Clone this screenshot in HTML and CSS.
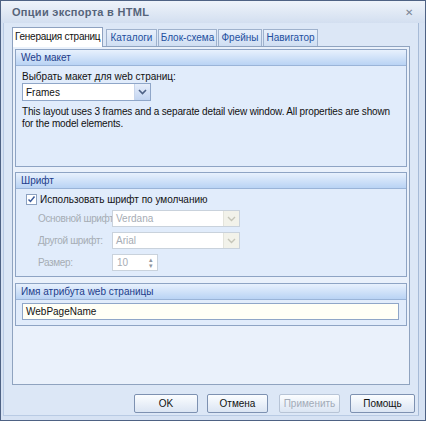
FILE: index.html
```html
<!DOCTYPE html>
<html>
<head>
<meta charset="utf-8">
<title>Опции экспорта в HTML</title>
<link rel="stylesheet" href="styles.css">
</head>
<body>
<div class="window">
  <div class="titlebar">
    <span class="title">Опции экспорта в HTML</span>
    <span class="close">&#x2715;</span>
  </div>
  <div class="frame">
    <div class="tabs">
      <div class="tab active t1">Генерация страниц</div>
      <div class="tab t2">Каталоги</div>
      <div class="tab t3">Блок-схема</div>
      <div class="tab t4">Фрейны</div>
      <div class="tab t5">Навигатор</div>
    </div>
    <div class="panel">
      <div class="group g-layout">
        <div class="ghead">Web макет</div>
        <div class="gbody">
          <div class="lbl">Выбрать макет для web страниц:</div>
          <div class="combo wide">
            <span class="val">Frames</span>
            <span class="drop"><svg width="9" height="6" viewBox="0 0 9 6"><path d="M1 1 L4.5 4.5 L8 1" fill="none" stroke="#4d6185" stroke-width="1.6"/></svg></span>
          </div>
          <div class="desc">This layout uses 3 frames and a separate detail view window. All properties are shown for the model elements.</div>
        </div>
      </div>
      <div class="group g-font">
        <div class="ghead">Шрифт</div>
        <div class="gbody">
          <div class="check">
            <span class="box"><svg width="9" height="9" viewBox="0 0 9 9"><path d="M1.5 4.5 L3.5 6.5 L7.5 1.5" fill="none" stroke="#3a5a9a" stroke-width="1.5"/></svg></span>
            <span>Использовать шрифт по умолчанию</span>
          </div>
          <div class="row">
            <span class="rlbl">Основной шрифт</span>
            <div class="combo off"><span class="val">Verdana</span><span class="drop"><svg width="9" height="6" viewBox="0 0 9 6"><path d="M1 1 L4.5 4.5 L8 1" fill="none" stroke="#c5c5b8" stroke-width="1.4"/></svg></span></div>
          </div>
          <div class="row">
            <span class="rlbl">Другой шрифт:</span>
            <div class="combo off"><span class="val">Arial</span><span class="drop"><svg width="9" height="6" viewBox="0 0 9 6"><path d="M1 1 L4.5 4.5 L8 1" fill="none" stroke="#c5c5b8" stroke-width="1.4"/></svg></span></div>
          </div>
          <div class="row">
            <span class="rlbl">Размер:</span>
            <div class="spin"><span class="val">10</span><span class="arrows">&#9652;<br>&#9662;</span></div>
          </div>
        </div>
      </div>
      <div class="group g-name">
        <div class="ghead">Имя атрибута web страницы</div>
        <div class="gbody">
          <div class="text">WebPageName</div>
        </div>
      </div>
    </div>
    <div class="buttons">
      <div class="btn ok">OK</div>
      <div class="btn cancel">Отмена</div>
      <div class="btn apply disabled">Применить</div>
      <div class="btn help">Помощь</div>
    </div>
  </div>
</div>
</body>
</html>
```

FILE: styles.css
```css
body {margin:0; padding:0; background:#fff;}
* {box-sizing:border-box; font-family:"Liberation Sans", Arial, sans-serif;}

.window {width:426px; height:421px; border:1px solid #4e6284; background:#d6e2f3; display:flex; flex-direction:column;}

.titlebar {height:22px; display:flex; align-items:center; justify-content:space-between; padding:0 12px 0 11px;
  background:linear-gradient(#eef3fa, #d3dff0);}
.titlebar .title {font-size:11px; font-weight:bold; color:#56647a; letter-spacing:0.3px;}
.titlebar .close {font-size:10px; color:#7a8594;}

.frame {flex:1; margin:0 6px 4px 2px; border-left:1px solid #b9cbe4; border-right:1px solid #a7bbd7; border-bottom:1px solid #b9cbe4;
  padding:3px 8px 0 8px; display:flex; flex-direction:column; background:#dce7f6;}

.tabs {display:flex; align-items:flex-end; height:20px;}
.tab {font-size:10px; color:#2450a0; height:17px; line-height:15px; margin-right:1px; text-align:center; white-space:nowrap;
  border:1px solid #9fb2cd; border-bottom:none; background:linear-gradient(#e8f0fb, #cfdef2);}
.tab.active {background:#fff; color:#111; height:20px; line-height:18px; border-color:#8ea2c0; position:relative; top:1px; margin-right:3px;
  padding-left:2px; text-align:left; letter-spacing:-0.25px;}
.t1 {min-width:91px;}
.t2 {width:51px;}
.t3 {width:59px;}
.t4 {width:44px;}
.t5 {width:55px;}

.panel {height:339px; border:1px solid #8fa3bf; background:#eaf1fb; padding:2px 2px 0 2px;}

.group {border:1px solid #8ea4c4; background:#e1ecfb; margin-bottom:5px;}
.ghead {height:16px; line-height:15px; font-size:10px; color:#1c3c8a; padding-left:5px;
  background:linear-gradient(#e8f1fd, #b9d3f4); border-bottom:1px solid #9ab4d8;}
.gbody {padding:0 6px;}
.g-layout {height:118px;}
.g-font {height:105px; margin-bottom:6px;}
.g-name {height:43px;}

.lbl {font-size:10px; color:#111; margin-top:4px; height:13px; line-height:13px;}
.combo {display:flex; align-items:center; height:18px; border:1px solid #8fa6c8; background:#fff; padding-left:3px;}
.combo.wide {width:129px;}
.combo .val {flex:1; font-size:10px; color:#111;}
.combo .drop {width:16px; height:16px; display:flex; align-items:center; justify-content:center;
  background:linear-gradient(#e6eefb, #c3d5f1); border-left:1px solid #c8d6ec;}
.desc {font-size:10px; color:#111; line-height:12px; margin-top:5px; letter-spacing:-0.15px;}

.check {display:flex; align-items:center; font-size:10px; color:#111; margin-top:4px; padding-left:4px; height:13px;}
.check .box {width:11px; height:11px; border:1px solid #8ca1c0; background:#fff; display:flex; align-items:center; justify-content:center; margin-right:3px;}
.row {display:flex; align-items:center; margin-top:4px; padding-left:16px; height:17px;}
.row + .row {margin-top:5px;}
.rlbl {width:74px; flex:none; font-size:10px; color:#a6acb4; white-space:nowrap; letter-spacing:-0.35px;}
.combo.off {width:128px; border-color:#c9d2dc; height:17px;}
.combo.off .val {color:#a6acb4;}
.combo.off .drop {background:#f2f2ea; border-left:1px solid #e4e4dc; height:15px;}
.spin {width:46px; height:17px; border:1px solid #c9d2dc; background:#fff; display:flex; align-items:center; padding-left:4px;}
.spin .val {flex:1; font-size:10px; color:#a6acb4;}
.spin .arrows {font-size:7px; line-height:6px; color:#8f96a0; width:12px; text-align:center;}

.text {height:17px; margin-top:3px; border:1px solid #8fa6c8; background:#fffff6; font-size:10px; line-height:15px; padding-left:3px; color:#111; margin-right:1px;}

.buttons {display:flex; justify-content:flex-end; padding:9px 0 0 0; margin-right:-5px;}
.btn {height:19px; border:1px solid #7d91b1; border-radius:2px; background:linear-gradient(#fbfdff, #dbe5f3);
  font-size:10px; color:#111; text-align:center; line-height:17px;}
.btn.ok {width:64px;}
.btn.cancel {width:61px; margin-left:9px;}
.btn.apply {width:61px; margin-left:11px;}
.btn.help {width:65px; margin-left:10px;}
.btn.disabled {color:#a2abb8; border-color:#b7c4d6;}
```
